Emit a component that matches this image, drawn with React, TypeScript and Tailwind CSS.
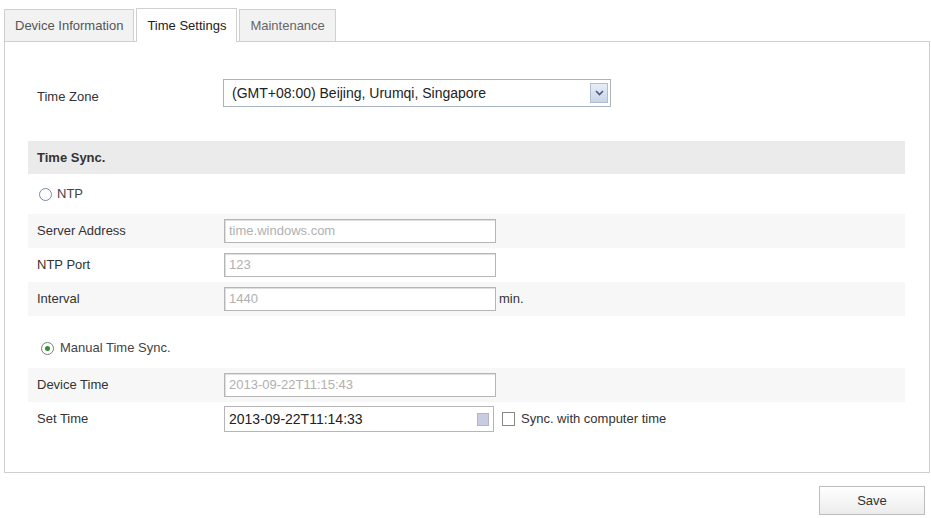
export default function App() {
  const f = { fontFamily: '"Liberation Sans", Arial, sans-serif' };
  const inputCls = "w-[272px] h-[24px] border border-[#b5b5b5] bg-white px-1 text-[13px] leading-[22px] text-[#b0b0b0] shadow-[inset_1px_1px_1px_#ddd]";
  return (
    <div className="w-[931px] h-[518px] bg-white text-[13px] text-[#333] relative" style={f}>
      <div className="flex items-end pl-[4px] pt-[8px] h-[41px]">
        <div className="h-[32px] px-[10px] flex items-center border border-[#d0d0d0] border-b-0 bg-[#f2f2f2] text-[#555]">Device Information</div>
        <div className="h-[34px] px-[10px] flex items-center border border-[#d0d0d0] border-b-0 bg-white text-[#222] ml-[2px] relative top-[1px]">Time Settings</div>
        <div className="h-[32px] px-[10px] flex items-center border border-[#d0d0d0] border-b-0 bg-[#f2f2f2] text-[#666] ml-[2px]">Maintenance</div>
      </div>
      <div className="mx-[4px] mr-[1px] h-[432px] border border-[#cfcfcf] pt-[37px] pl-[23px] pr-[24px]">
        <div className="flex items-center h-[28px]">
          <div className="w-[195px] pl-[9px] pt-[8px]">Time Zone</div>
          <div className="w-[388px] h-[28px] border border-[#a8b4c4] flex items-center pl-[8px] text-[14px] text-[#222]">
            <span className="flex-1">(GMT+08:00) Beijing, Urumqi, Singapore</span>
            <span className="w-[18px] h-[20px] mr-[2px] bg-gradient-to-b from-[#e8eef8] to-[#c8d4e8] border border-[#b0bcd0] flex items-center justify-center">
              <svg width="9" height="6" viewBox="0 0 9 6"><path d="M1 1l3.5 3.5L8 1" stroke="#4a5a78" strokeWidth="1.6" fill="none" /></svg>
            </span>
          </div>
        </div>
        <div className="mt-[34px] h-[33px] bg-[#ebebeb] flex items-center pl-[9px] font-bold text-[#333]">Time Sync.</div>
        <div className="h-[40px] flex items-center pl-[11px] gap-[5px] text-[#444]">
          <span className="w-[13px] h-[13px] rounded-full border border-[#7a8aa0] bg-white" />NTP
        </div>
        <Row stripe label="Server Address"><div className={inputCls}>time.windows.com</div></Row>
        <Row label="NTP Port"><div className={inputCls}>123</div></Row>
        <Row stripe label="Interval"><div className={inputCls}>1440</div><span className="ml-[3px] text-[#333]">min.</span></Row>
        <div className="h-[52px] flex items-center pl-[13px] gap-[6px] text-[#444] pt-[12px]">
          <span className="w-[13px] h-[13px] rounded-full border border-[#6a8a6a] bg-white flex items-center justify-center"><span className="w-[5px] h-[5px] rounded-full bg-[#3a8a3a]" /></span>Manual Time Sync.
        </div>
        <Row stripe label="Device Time"><div className={inputCls}>2013-09-22T11:15:43</div></Row>
        <Row label="Set Time">
          <div className="w-[270px] h-[26px] border border-[#b5b5b5] bg-white px-1 text-[14px] leading-[24px] text-[#222] flex items-center">
            <span className="flex-1">2013-09-22T11:14:33</span>
            <span className="w-[12px] h-[13px] bg-[#c9cbe0] border border-[#b0b4cc]" />
          </div>
          <span className="ml-[8px] w-[13px] h-[14px] border border-[#888] bg-white" />
          <span className="ml-[6px] text-[#333]">Sync. with computer time</span>
        </Row>
      </div>
      <div className="flex justify-end pr-[6px] pt-[13px]">
        <button className="w-[106px] h-[29px] border border-[#bdbdbd] bg-gradient-to-b from-white to-[#ececec] text-[13px] text-[#333]" style={f}>Save</button>
      </div>
    </div>
  );
}

function Row({ label, stripe, children }: { label: string; stripe?: boolean; children: React.ReactNode }) {
  return (
    <div className={"h-[34px] flex items-center pl-[9px] " + (stripe ? "bg-[#f7f7f7]" : "")}>
      <div className="w-[187px]">{label}</div>
      {children}
    </div>
  );
}
